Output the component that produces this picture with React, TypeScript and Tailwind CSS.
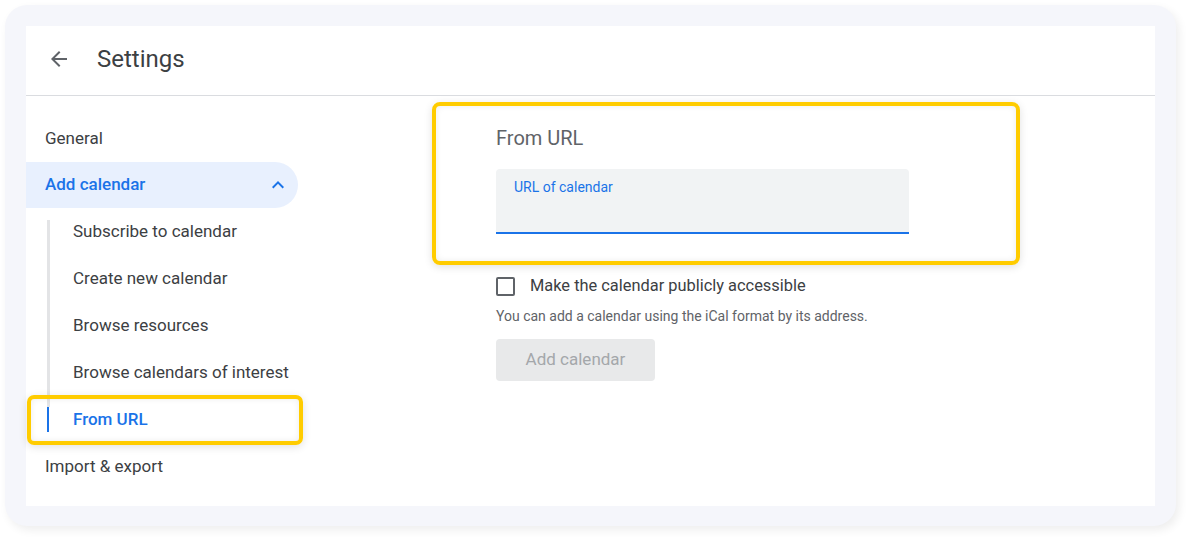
const subItems = [
  "Subscribe to calendar",
  "Create new calendar",
  "Browse resources",
  "Browse calendars of interest",
];

const ArrowBack = () => (
  <svg width="24" height="24" viewBox="0 0 24 24" fill="#5f6368">
    <path d="M20 11H7.83l5.59-5.59L12 4l-8 8 8 8 1.41-1.41L7.83 13H20v-2z" />
  </svg>
);

const ChevronUp = () => (
  <svg width="24" height="24" viewBox="0 0 24 24" fill="#1a73e8">
    <path d="M12 8l-6 6 1.41 1.41L12 10.83l4.59 4.58L18 14z" />
  </svg>
);

const SideNav = () => (
  <nav className="relative w-[290px] shrink-0 pt-[19px] text-[17px] text-[#3c4043]">
    <div className="flex h-[47px] items-center pl-[19px]">General</div>

    {/* Active group */}
    <div className="flex h-[46px] w-[272px] items-center justify-between rounded-r-full bg-[#e8f0fe] pl-[19px] pr-[8px] font-medium text-[#1a73e8]">
      <span>Add calendar</span>
      <ChevronUp />
    </div>

    <div className="pl-[21px]">
      {subItems.map((label, index) => (
        <div key={label} className="flex h-[47px]">
          <div className="flex w-[3px] flex-col">
            <div
              className={
                index === 0 ? "mt-[12px] flex-1 bg-[#e3e4e6]" : "flex-1 bg-[#e3e4e6]"
              }
            />
          </div>
          <div className="flex items-center pl-[23px]">{label}</div>
        </div>
      ))}
      <div className="flex h-[47px]">
        <div className="flex w-[3px] flex-col">
          <div className="h-[11px] bg-[#e3e4e6]" />
          <div className="h-[25px] w-[2px] bg-[#1a73e8]" />
        </div>
        <div className="flex items-center pl-[23px] font-medium text-[#1a73e8]">
          From URL
        </div>
      </div>
    </div>

    <div className="flex h-[47px] items-center pl-[19px]">Import &amp; export</div>

    {/* highlight */}
    <div className="pointer-events-none absolute left-[1px] top-[299px] h-[50px] w-[276px] rounded-[7px] border-4 border-[#ffcc00] shadow-[0_2px_8px_rgba(0,0,0,0.12),inset_0_0_6px_rgba(0,0,0,0.08)]" />
  </nav>
);

const FromUrlForm = () => (
  <main className="relative flex-1 pl-[180px] pt-[28px]">
    <h2 className="text-[20px] leading-[28px] text-[#5f6368]">From URL</h2>

    <div className="mt-[17px] flex h-[65px] w-[413px] flex-col rounded-t-[4px] border-b-2 border-[#1a73e8] bg-[#f1f3f4] pl-[18px] pt-[8px]">
      <span className="text-[14px] leading-[20px] text-[#1a73e8]">URL of calendar</span>
    </div>

    <label className="mt-[40px] flex items-center gap-[15px]">
      <span className="h-[19px] w-[19px] rounded-[2px] border-2 border-[#5f6368]" />
      <span className="text-[16.4px] text-[#3c4043]">
        Make the calendar publicly accessible
      </span>
    </label>

    <p className="mt-[7px] text-[14px] leading-[20px] text-[#5f6368]">
      You can add a calendar using the iCal format by its address.
    </p>

    <button className="mt-[13px] flex h-[42px] w-[159px] items-center justify-center rounded-[4px] bg-[#e8e9ea] text-[17px] text-[#a4a7aa]">
      Add calendar
    </button>

    {/* highlight */}
    <div className="pointer-events-none absolute left-[116px] top-[6px] h-[163px] w-[588px] rounded-[8px] border-4 border-[#ffcc00] shadow-[0_2px_8px_rgba(0,0,0,0.12),inset_0_0_6px_rgba(0,0,0,0.08)]" />
  </main>
);

export default function App() {
  return (
    <div
      className="h-[551px] w-[1202px] bg-white p-[5px]"
      style={{ fontFamily: "Roboto, 'Liberation Sans', sans-serif" }}
    >
      <div className="h-[521px] w-[1171px] rounded-[22px] bg-[#f5f6fb] p-[21px] shadow-[3px_4px_10px_rgba(0,0,0,0.07)]">
        <div className="flex h-[480px] flex-col bg-white">
          <header className="flex h-[70px] shrink-0 items-center border-b border-[#dadce0] pb-[3px] pl-[21px]">
            <ArrowBack />
            <h1 className="ml-[26px] text-[24px] text-[#3c4043]">Settings</h1>
          </header>
          <div className="flex flex-1">
            <SideNav />
            <FromUrlForm />
          </div>
        </div>
      </div>
    </div>
  );
}
